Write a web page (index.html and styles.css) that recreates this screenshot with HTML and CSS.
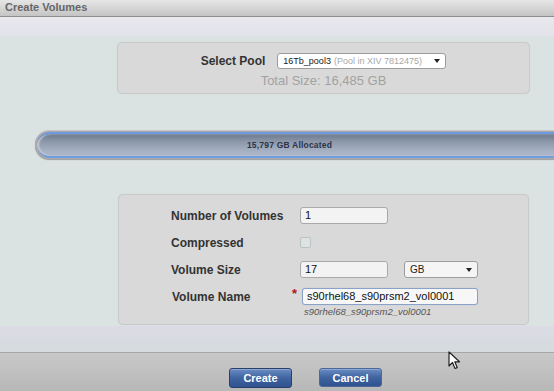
FILE: index.html
```html
<!DOCTYPE html>
<html>
<head>
<meta charset="utf-8">
<link rel="stylesheet" href="styles.css">
</head>
<body>
<div class="window">
  <div class="titlebar">Create Volumes</div>
  <div class="band-top"></div>
  <div class="content">
    <div class="panel pool-panel">
      <div class="pool-row">
        <span class="label">Select Pool</span>
        <div class="select pool-select"><span class="sel-main">16Tb_pool3</span><span class="sel-sub">(Pool in XIV 7812475)</span><span class="caret"></span></div>
      </div>
      <div class="total">Total Size: 16,485 GB</div>
    </div>
    <div class="bar"><div class="bar-inner">15,797 GB Allocated</div></div>
    <div class="panel form-panel">
      <div class="frow">
        <span class="label flabel">Number of Volumes</span>
        <div class="input small">1</div>
      </div>
      <div class="frow">
        <span class="label flabel">Compressed</span>
        <div class="checkbox"></div>
      </div>
      <div class="frow">
        <span class="label flabel">Volume Size</span>
        <div class="input small">17</div>
        <div class="select unit"><span class="sel-main">GB</span><span class="caret"></span></div>
      </div>
      <div class="frow name-row">
        <span class="label flabel">Volume Name</span>
        <span class="star">*</span>
        <div class="input wide focused">s90rhel68_s90prsm2_vol0001</div>
      </div>
      <div class="hint">s90rhel68_s90prsm2_vol0001</div>
    </div>
  </div>
  <div class="band-bottom"></div>
  <div class="footer">
    <button class="btn btn-create">Create</button>
    <button class="btn btn-cancel">Cancel</button>
  </div>
  <svg class="cursor" width="14" height="20" viewBox="0 0 14 20"><path d="M1 1 L1 15 L4.5 11.5 L7 17.5 L9.2 16.6 L6.8 10.8 L11.5 10.8 Z" fill="#fff" stroke="#222" stroke-width="1.2" stroke-linejoin="round"/></svg>
</div>
</body>
</html>
```
FILE: styles.css
```css
html, body {
  margin: 0;
  padding: 0;
  width: 554px;
  height: 391px;
  overflow: hidden;
}
body {
  font-family: "Liberation Sans", Arial, sans-serif;
  background: #dbe3e2;
}
.window {
  position: relative;
  width: 554px;
  height: 391px;
  overflow: hidden;
  display: flex;
  flex-direction: column;
}
.titlebar {
  height: 16px;
  line-height: 14px;
  padding-left: 5px;
  font-size: 11px;
  font-weight: bold;
  color: #666;
  background: linear-gradient(#e6e6e6, #d2d2d2 60%, #c4c4c4);
  border-bottom: 1px solid #8e8e8e;
  box-shadow: 0 1px 1px #b8b8b8;
}
.band-top {
  height: 19px;
  background: linear-gradient(#e8e8ee, #e2e3ea);
}
.content {
  flex: 1;
  display: flex;
  flex-direction: column;
  background: #dbe3e2;
}
.panel {
  background: #d9d9d9;
  border: 1px solid #c8cbcb;
  border-radius: 5px;
  box-shadow: 0 0 1px #c9cccc;
}
.pool-panel {
  margin: 6px 0 0 117px;
  width: 411px;
  height: 50px;
  display: flex;
  flex-direction: column;
  align-items: center;
}
.pool-row {
  display: flex;
  align-items: center;
  margin-top: 10px;
}
.label {
  font-size: 12px;
  font-weight: bold;
  color: #333;
}
.select {
  position: relative;
  box-sizing: border-box;
  height: 16px;
  background: #fff;
  border: 1px solid #9d9d9d;
  border-radius: 3px;
  font-size: 9px;
  line-height: 14px;
  padding-left: 5px;
  white-space: nowrap;
}
.pool-select {
  width: 169px;
  margin-left: 12px;
}
.sel-main { color: #222; }
.sel-sub { color: #a8a8a8; margin-left: 3px; }
.caret {
  position: absolute;
  right: 5px;
  top: 5px;
  width: 0;
  height: 0;
  border-left: 3.5px solid transparent;
  border-right: 3.5px solid transparent;
  border-top: 4px solid #222;
}
.total {
  margin-top: 4px;
  font-size: 13px;
  color: #a2a2a2;
}
.bar {
  margin: 37px -40px 0 35px;
  height: 28px;
  box-sizing: border-box;
  border-radius: 14px 0 0 14px;
  background: #a9a9ad;
  padding: 1px 0 1px 2px;
  box-shadow: 0 -1px 0 #c9c3c6, 0 1px 1px #9c9c9c;
}
.bar-inner {
  height: 100%;
  box-sizing: border-box;
  border-radius: 13px 0 0 13px;
  border-top: 2px solid #6a9ae0;
  border-bottom: 2px solid #6f9fdf;
  background: linear-gradient(#6b788c, #8c97aa 35%, #a4afc2 75%, #aeb8ca);
  font-size: 8.5px;
  font-weight: bold;
  color: #2b3448;
  line-height: 22px;
  padding-right: 52px;
  text-align: center;
  letter-spacing: 0.2px;
  box-shadow: inset 2px 0 2px #c7cad2;
}
.form-panel {
  margin: 35px 0 0 118px;
  width: 411px;
  height: 131px;
  box-sizing: border-box;
  padding: 12px 0 0 52px;
  display: flex;
  flex-direction: column;
}
.frow {
  display: flex;
  align-items: center;
  height: 17px;
  margin-bottom: 10px;
}
.flabel {
  width: 129px;
  flex: none;
}
.input {
  box-sizing: border-box;
  height: 17px;
  background: #f3f3f3;
  border: 1px solid #a9a9a9;
  border-radius: 3px;
  font-size: 11px;
  line-height: 15px;
  padding-left: 4px;
  color: #111;
}
.small { width: 88px; }
.checkbox {
  width: 11px;
  height: 11px;
  box-sizing: border-box;
  border: 1px solid #bcc2c2;
  border-radius: 2px;
  background: #dde3e3;
}
.unit {
  width: 74px;
  height: 17px;
  margin-left: 16px;
  font-size: 10px;
  line-height: 15px;
  background: #f5f5f5;
}
.unit .caret { top: 6px; }
.name-row .flabel { width: 120px; padding-left: 1px; }
.star {
  color: #b01616;
  font-size: 13px;
  font-weight: bold;
  width: 10px;
  margin-top: -6px;
}
.wide {
  width: 176px;
  background: #f7f7f7;
  border-color: #8aa1c8;
  box-shadow: 0 0 1px #9fb5dc;
}
.hint {
  margin: -9px 0 0 133px;
  font-size: 9.5px;
  font-style: italic;
  color: #555;
}
.band-bottom {
  height: 26px;
  margin-top: 1px;
  background: linear-gradient(#dcdbe5, #d4dbdd);
  border-bottom: 1px solid #a6a6a6;
}
.footer {
  height: 38px;
  background: linear-gradient(#c8c8c8, #b8b8b8);
  display: flex;
  align-items: flex-end;
  padding-bottom: 3px;
  box-sizing: border-box;
  padding-left: 229px;
  gap: 27px;
}
.btn {
  width: 63px;
  height: 20px;
  padding: 0;
  border: 1px solid #2c3f66;
  border-radius: 3px;
  background: linear-gradient(#6a8cc2, #3f64a0 50%, #2f5290);
  color: #fff;
  font-family: "Liberation Sans", Arial, sans-serif;
  font-size: 11px;
  font-weight: bold;
  box-shadow: inset 0 1px 0 #8aa6d4;
}
.btn-cancel {
  border-color: #4d6796;
  height: 19px;
  margin-bottom: 1px;
}
.cursor {
  position: absolute;
  left: 448px;
  top: 351px;
}
```
